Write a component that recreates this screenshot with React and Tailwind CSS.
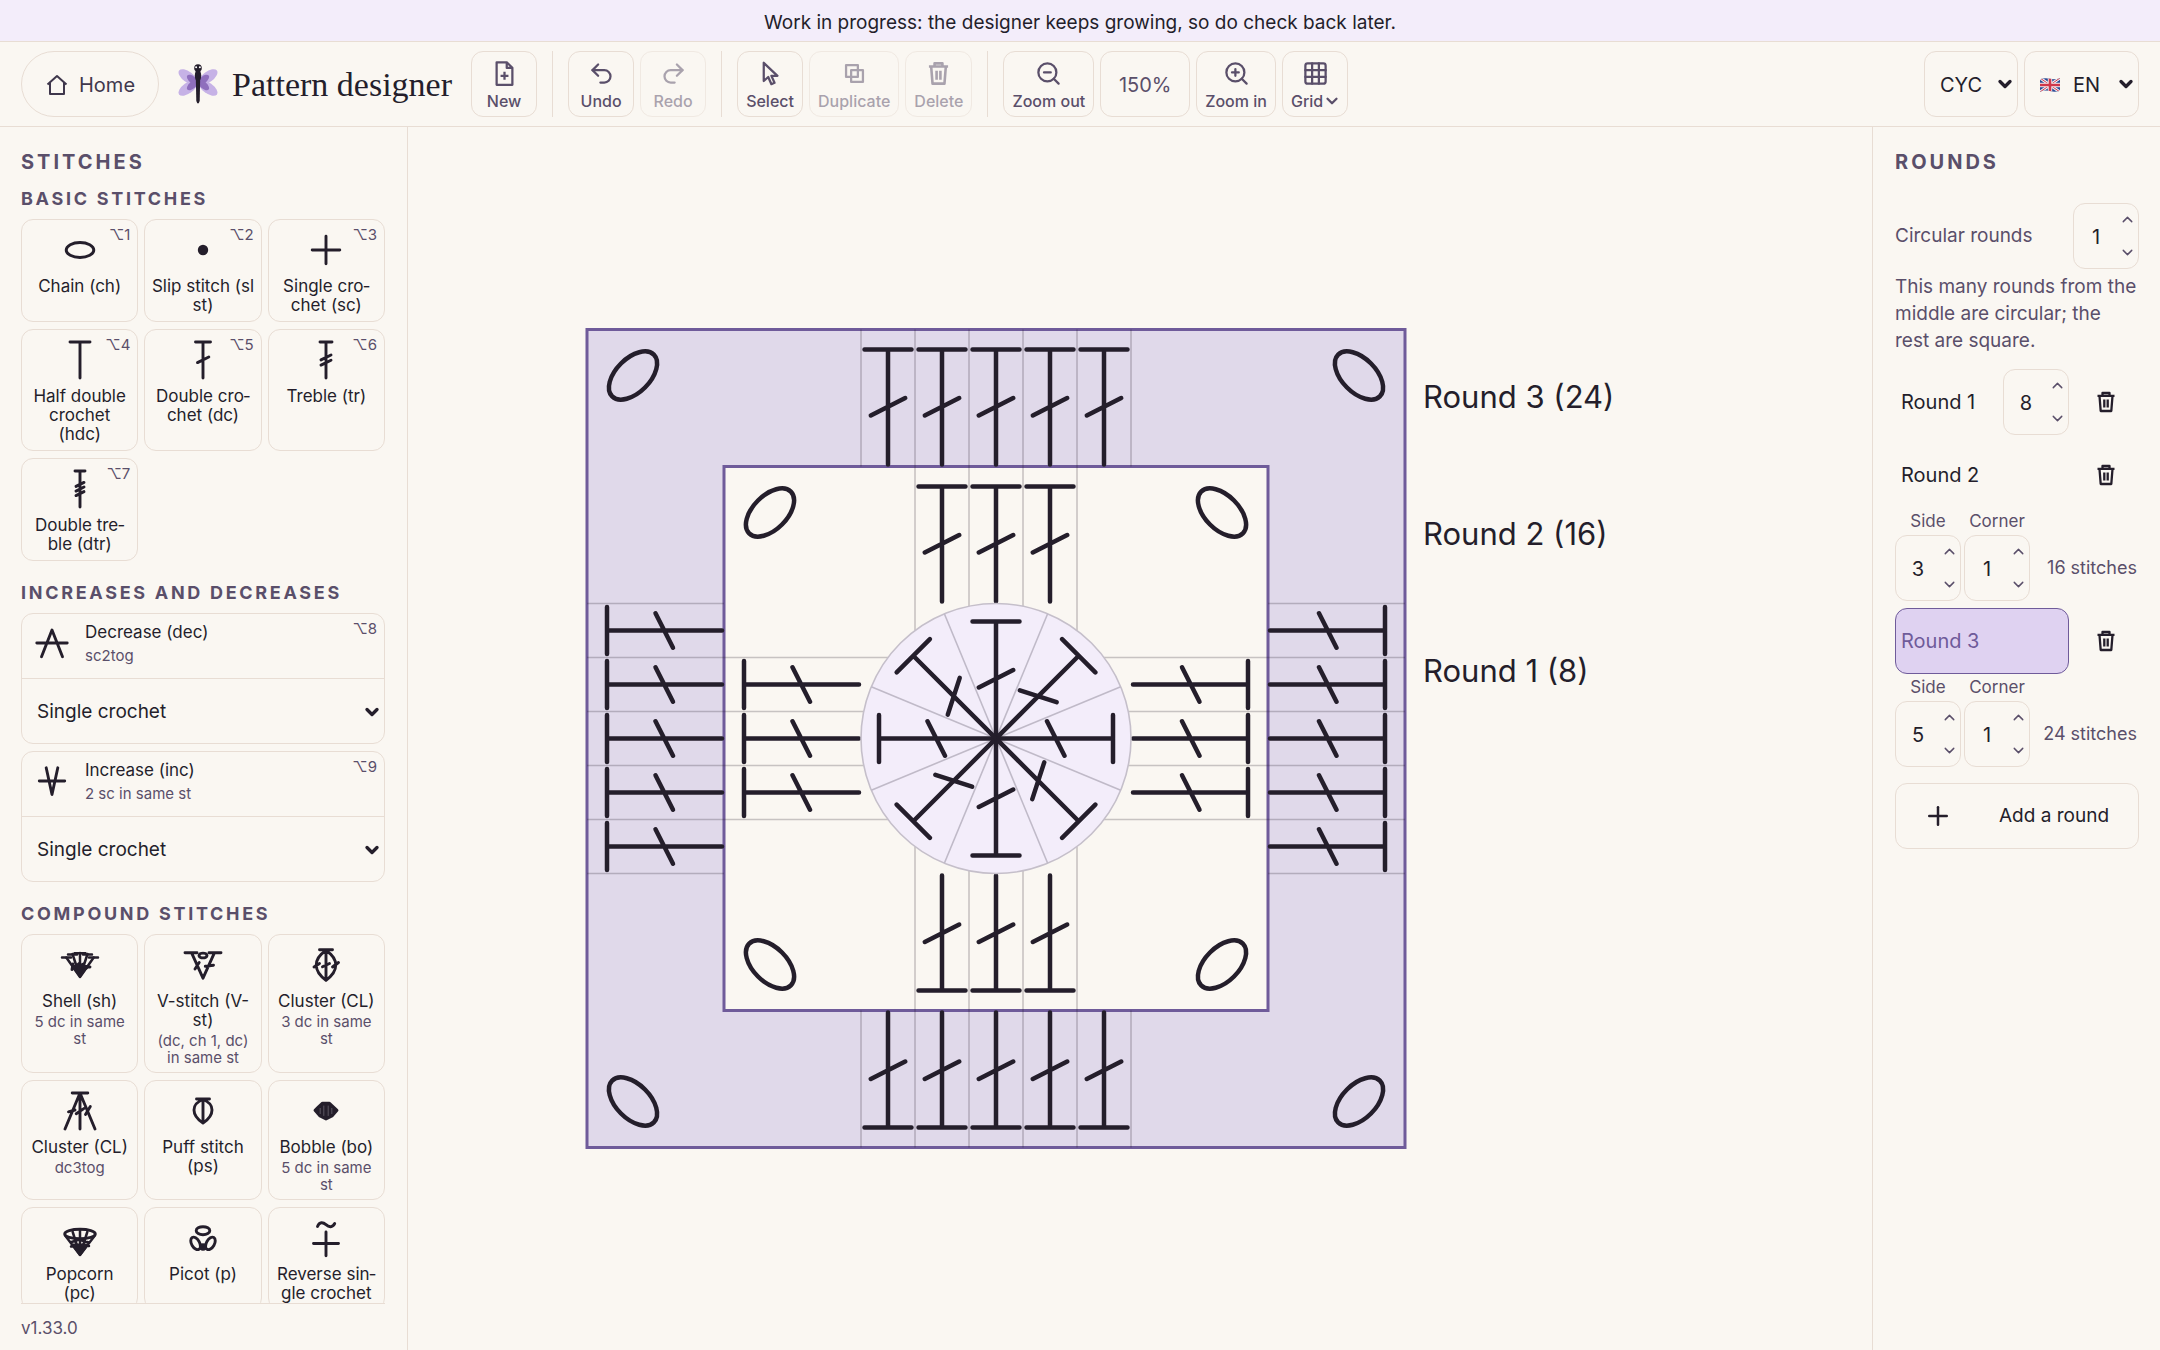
import { useState } from 'react';
import { ChevronDown, ChevronUp, Grid3x3, Plus, Redo2, Undo2, ZoomIn, ZoomOut } from 'lucide-react';

const INK = '#241e2b';

// ── Stitch symbols (drawn around 0,0 in a 40x40 box) ───────────────────────
const SYMBOLS = {
  chain: <ellipse rx="13.8" ry="7.5" />,
  slip: <circle r="5.2" fill={INK} stroke="none" />,
  single: <path d="M-13.8 0H13.8M0-13.8V13.8" />,
  half: <path d="M-10-18H10M0-18V18" />,
  double: <path d="M-7.5-18H7.5M0-18V18M-5.5 2.6 5.8-3" />,
  treble: <path d="M-6-18H6M0-18V18M-5-.1 5-5M-5 5.1 5 .2" />,
  dtreble: <path d="M-5-18H5M0-18V18M-4-2.6 4-6.6M-4 2.1 4-2M-4 6.6 4 2.6" />,
  decrease: <path d="M-10.5 13.7 0-13 10.5 13.7M-15.2 0H15.2" />,
  increase: <path d="M-5.8-13.2 0 13.5 5.8-13.2M-12.7 0H12.7" />,
  shell: (
    <>
      <path d="M0 12-13.7-7.5M0 12-7.5-11M0 12V-12M0 12 7.5-11M0 12 13.7-7.5" strokeWidth="2.5" />
      <path d="M-18-7.5H-9M-12-10.6H-3M-5.5-11.8H5.5M3-10.6H12M9-7.5H18" strokeWidth="2.5" />
      <path d="M-8 4.5-7-1M-6 3-1-1.5M-3 2 3.4-1M1 0 6.5 3M3.5 1.5 10 2" />
      <path d="M0 11-7 1.5H7z" fill={INK} />
    </>
  ),
  vstitch: (
    <>
      <path d="M-11.5-12.3 0 13.2 11.5-12.3M-18-12.3H-6M6-12.3H18M-8 4-3.8-2.5M2.3 1.2 10.5 .2" />
      <ellipse cy="-9.5" rx="4" ry="2.4" />
    </>
  ),
  cluster: (
    <path d="M-6.5-15.3H6.5M0-15.3V15.3M0-14.5C-13-6-13 6 0 15.3M0-14.5C13-6 13 6 0 15.3M-12 2-6.5-1.5M-3.5 1.8 3.5-1.5M6.5 2 12.5-2.5" />
  ),
  clusterDec: (
    <path d="M-7.8-18H7.8M0-18V18M0-18-15 18M0-18 15 18M-11.5.8-5-1M-3.8 2.8 3.8-2.4M5.5 3.5 10.3-4.5" />
  ),
  puff: <path d="M-6.5-12H6.5M0-12V12M0-11.5C-12-7-12 4 0 12M0-11.5C12-7 12 4 0 12" />,
  bobble: (
    <>
      <path d="M-3.5-7.8H3.5L11-.8 6 5 0 8-6 5-11-.8-7.5-4.2z" fill={INK} />
      <path d="M-2.2-5V4.5M2.2-5V4.5M-5.8-2.6V2.6M5.8-2.6V2.6" stroke="#746e79" strokeWidth="0.7" />
    </>
  ),
  popcorn: (
    <>
      <ellipse cy="-4" rx="15.3" ry="4.8" />
      <path d="M0 17-14.5-2M0 17-7.3-6M0 17V-8M0 17 7.3-6M0 17 14.5-2M-9 8.5 9 8M-8.5 4-2 2M2 2.5 9 4.5" strokeWidth="2.5" />
      <path d="M0 16.5-7 7H7z" fill={INK} />
    </>
  ),
  picot: (
    <>
      <ellipse cy="-7.3" rx="6.8" ry="4" />
      <ellipse cx="-7.4" cy="5.4" rx="4" ry="6.8" transform="rotate(-30 -7.4 5.4)" />
      <ellipse cx="7.4" cy="5.4" rx="4" ry="6.8" transform="rotate(30 7.4 5.4)" />
      <circle cy="9" r="2.3" fill={INK} />
    </>
  ),
  reverse: <path d="M-8.5-11.5C-6.5-16.5-3-16 0-13.3S6.5-10.3 8.7-14.5M0-6V17.7M-12.5 5.5H12.5" />,
};

function Symbol({ name }) {
  return (
    <svg viewBox="-20 -20 40 40" className="size-10 shrink-0" fill="none" stroke={INK} strokeWidth="2.9" strokeLinecap="round" strokeLinejoin="round" aria-hidden="true">
      {SYMBOLS[name]}
    </svg>
  );
}

const BASIC = [
  { symbol: 'chain', name: 'Chain (ch)', key: '⌥1' },
  { symbol: 'slip', name: 'Slip stitch (sl st)', key: '⌥2' },
  { symbol: 'single', name: 'Single cro\u00adchet (sc)', key: '⌥3' },
  { symbol: 'half', name: 'Half double crochet (hdc)', key: '⌥4' },
  { symbol: 'double', name: 'Double cro\u00adchet (dc)', key: '⌥5' },
  { symbol: 'treble', name: 'Treble (tr)', key: '⌥6' },
  { symbol: 'dtreble', name: 'Double tre\u00adble (dtr)', key: '⌥7' },
];

const SHAPING = [
  { symbol: 'decrease', name: 'Decrease (dec)', note: 'sc2tog', key: '⌥8' },
  { symbol: 'increase', name: 'Increase (inc)', note: '2 sc in same st', key: '⌥9' },
];

const COMPOUND = [
  { symbol: 'shell', name: 'Shell (sh)', note: '5 dc in same st' },
  { symbol: 'vstitch', name: 'V-stitch (V-st)', note: '(dc, ch 1, dc) in same st' },
  { symbol: 'cluster', name: 'Cluster (CL)', note: '3 dc in same st' },
  { symbol: 'clusterDec', name: 'Cluster (CL)', note: 'dc3tog' },
  { symbol: 'puff', name: 'Puff stitch (ps)' },
  { symbol: 'bobble', name: 'Bobble (bo)', note: '5 dc in same st' },
  { symbol: 'popcorn', name: 'Popcorn (pc)' },
  { symbol: 'picot', name: 'Picot (p)' },
  { symbol: 'reverse', name: 'Reverse sin\u00adgle crochet' },
];

// ── Icons ──────────────────────────────────────────────────────────────────
function Icon({ children, className = 'size-[27px]' }) {
  return (
    <svg viewBox="0 0 24 24" className={className} fill="none" stroke="currentColor" strokeWidth="2" strokeLinejoin="round" aria-hidden="true">
      {children}
    </svg>
  );
}

const FileIcon = () => (
  <Icon>
    <path d="M5 2h9l5 5v15H5zM14 2v5h5M12 10.5v7M8.5 14h7" />
  </Icon>
);
const PointerIcon = () => (
  <Icon>
    <path d="M6 2.5v16.2l4-3.6 2.8 6.4 2.8-1.2-2.8-6.2h5.4z" />
  </Icon>
);
const DuplicateIcon = () => (
  <Icon>
    <path d="M4.5 4.5h10.5v10.5H4.5zM9 9h10.5v10.5H9z" />
  </Icon>
);
const TrashIcon = ({ className }) => (
  <Icon className={className}>
    <path d="M3.5 5.8h17M8.5 5.5V3h7v2.5M5.5 6l1.2 15h10.6l1.2-15M10.3 9.5v8M13.7 9.5v8" strokeWidth="2.3" />
  </Icon>
);

function Dragonfly() {
  return (
    <svg viewBox="-20 -20 40 40" className="size-10" aria-hidden="true">
      <g fill="#c6b2e6">
        <ellipse cx="-10" cy="-7" rx="11" ry="5.4" transform="rotate(36 -10 -7)" />
        <ellipse cx="10" cy="-7" rx="11" ry="5.4" transform="rotate(-36 10 -7)" />
        <ellipse cx="-10" cy="4" rx="11" ry="5.4" transform="rotate(-36 -10 4)" />
        <ellipse cx="10" cy="4" rx="11" ry="5.4" transform="rotate(36 10 4)" />
      </g>
      <g fill="#8f6fbd">
        <ellipse cx="-5.5" cy="-4.2" rx="6.8" ry="3.4" transform="rotate(40 -5.5 -4.2)" />
        <ellipse cx="5.5" cy="-4.2" rx="6.8" ry="3.4" transform="rotate(-40 5.5 -4.2)" />
        <ellipse cx="-5.5" cy="1.2" rx="6.8" ry="3.4" transform="rotate(-40 -5.5 1.2)" />
        <ellipse cx="5.5" cy="1.2" rx="6.8" ry="3.4" transform="rotate(40 5.5 1.2)" />
      </g>
      <g fill={INK}>
        <circle cy="-16" r="3.8" />
        <ellipse cy="-8.5" rx="3.2" ry="6" />
        <path d="M-2.2-6H2.2L1.7 17Q0 22-1.7 17z" />
      </g>
      <circle cx="-1.9" cy="-16.8" r="1" fill="#fff" />
      <circle cx="1.9" cy="-16.8" r="1" fill="#fff" />
    </svg>
  );
}

function Flag() {
  return (
    <svg viewBox="0 0 20 14" className="h-3.5 w-5" aria-hidden="true">
      <clipPath id="flag">
        <path d="M0 1.2Q5-.4 10 .8T20 .2V12.8Q15 14.4 10 13T0 13.8z" />
      </clipPath>
      <g clipPath="url(#flag)">
        <path d="M0 0h20v14H0z" fill="#2b4a94" />
        <path d="M0 0l20 14M20 0 0 14" stroke="#f2eff2" strokeWidth="3" />
        <path d="M0 0l20 14M20 0 0 14" stroke="#d0374a" strokeWidth="1" />
        <path d="M10 0v14M0 7h20" stroke="#f2eff2" strokeWidth="4.4" />
        <path d="M10 0v14M0 7h20" stroke="#d0374a" strokeWidth="2.6" />
      </g>
    </svg>
  );
}

// ── Toolbar ────────────────────────────────────────────────────────────────
function ToolButton({ icon, label, disabled }) {
  return (
    <button
      type="button"
      disabled={disabled}
      className="flex h-[66px] min-w-[66px] flex-col items-center gap-[3px] rounded-xl border border-[#e8ddd4] px-2 pt-2 text-base/[22px] font-medium text-[#5a4f6a] disabled:opacity-50"
    >
      {icon}
      <span className="flex items-center">{label}</span>
    </button>
  );
}

const Divider = () => <div className="mx-[9px] h-[66px] w-px bg-[#e8ddd4]" />;

function Toolbar({ zoom }) {
  return (
    <header className="flex items-center border-b border-[#e8ddd4] px-[21px] py-[9px]">
      <a href="#home" className="flex h-[66px] items-center gap-2.5 rounded-full border border-[#e8ddd4] px-[23px] pt-0.5 text-xl text-[#3f374c]">
        <Icon className="size-6">
          <path d="M2.5 11.5 12 3l9.5 8.5M5 9.5V21h14V9.5" />
        </Icon>
        Home
      </a>
      <div className="ml-[19px] flex items-center gap-3.5">
        <Dragonfly />
        <h1 className="pt-0.5 font-['Liberation_Serif',serif] text-[34px]/[40px]">Pattern designer</h1>
      </div>
      <div className="ml-[19px] flex items-center gap-1.5">
        <ToolButton icon={<FileIcon />} label="New" />
        <Divider />
        <ToolButton icon={<Undo2 size={27} />} label="Undo" />
        <ToolButton icon={<Redo2 size={27} />} label="Redo" disabled />
        <Divider />
        <ToolButton icon={<PointerIcon />} label="Select" />
        <ToolButton icon={<DuplicateIcon />} label="Duplicate" disabled />
        <ToolButton icon={<TrashIcon />} label="Delete" disabled />
        <Divider />
        <ToolButton icon={<ZoomOut size={27} />} label="Zoom out" />
        <button type="button" className="h-[66px] w-[90px] rounded-xl border border-[#e8ddd4] pt-0.5 text-xl text-[#5a4f6a]">{zoom}%</button>
        <ToolButton icon={<ZoomIn size={27} />} label="Zoom in" />
        <ToolButton icon={<Grid3x3 size={27} />} label={<>Grid <ChevronDown size={18} strokeWidth={3} className="-mr-0.5" /></>} />
      </div>
      <div className="ml-auto flex gap-1.5">
        <div className="relative">
          <select aria-label="Terminology" className="h-[66px] w-[94px] appearance-none rounded-xl border border-[#e8ddd4] pt-0.5 pl-[15px] text-xl">
            <option>CYC</option>
          </select>
          <ChevronDown size={20} strokeWidth={4} className="pointer-events-none absolute top-[23px] right-[3px]" />
        </div>
        <div className="relative">
          <select aria-label="Language" className="h-[66px] w-[115px] appearance-none rounded-xl border border-[#e8ddd4] pt-0.5 pl-12 text-xl">
            <option>EN</option>
          </select>
          <span className="pointer-events-none absolute top-[27px] left-4"><Flag /></span>
          <ChevronDown size={20} strokeWidth={4} className="pointer-events-none absolute top-[23px] right-[3px]" />
        </div>
      </div>
    </header>
  );
}

// ── Stitch palette ─────────────────────────────────────────────────────────
function StitchTile({ stitch }) {
  return (
    <button type="button" className="relative flex flex-col items-center rounded-xl border border-[#e8ddd4] px-1.5 pt-2.5 pb-1.5 text-center">
      <Symbol name={stitch.symbol} />
      <span className="mt-[7px] text-[17px]/[19px]">{stitch.name}</span>
      {stitch.note && <span className="mt-0.5 text-[15px]/[17px] text-[#5a4f6a]">{stitch.note}</span>}
      {stitch.key && <kbd className="absolute top-1.5 right-[7px] font-[Inter,sans-serif] text-[15px]/[18px] text-[#5a4f6a]">{stitch.key}</kbd>}
    </button>
  );
}

function ShapingCard({ stitch }) {
  return (
    <div className="rounded-xl border border-[#e8ddd4]">
      <button type="button" className="relative flex h-16 w-full items-center gap-[13px] pb-1.5 pl-2.5 text-left">
        <Symbol name={stitch.symbol} />
        <span className="flex flex-col">
          <span className="text-[17px]/[26px]">{stitch.name}</span>
          <span className="text-[15px]/[22px] text-[#5a4f6a]">{stitch.note}</span>
        </span>
        <kbd className="absolute top-1.5 right-[7px] font-[Inter,sans-serif] text-[15px]/[18px] text-[#5a4f6a]">{stitch.key}</kbd>
      </button>
      <div className="relative border-t border-[#e8ddd4]">
        <select aria-label={`${stitch.name} stitch`} className="h-16 w-full appearance-none pt-0.5 pl-[15px] text-[19px]">
          <option>Single crochet</option>
        </select>
        <ChevronDown size={20} strokeWidth={4} className="pointer-events-none absolute top-[23px] right-[2px]" />
      </div>
    </div>
  );
}

function PaletteSection({ title, children }) {
  return (
    <section className="mb-[19px]">
      <h3 className="mb-[7px] text-lg/[26px] font-bold tracking-[0.15em] text-[#5a4f6a] uppercase">{title}</h3>
      {children}
    </section>
  );
}

function Palette() {
  return (
    <aside className="flex w-[408px] shrink-0 flex-col border-r border-[#e8ddd4] pr-[22px] pl-[21px]">
      <div className="min-h-0 flex-1 overflow-y-auto border-b border-[#e8ddd4] pt-[21px] [scrollbar-width:none]">
        <h2 className="mb-2.5 text-xl/[28px] font-bold tracking-[0.15em] text-[#5a4f6a] uppercase">Stitches</h2>
        <PaletteSection title="Basic stitches">
          <div className="grid grid-cols-3 gap-x-1.5 gap-y-[7px]">
            {BASIC.map(s => <StitchTile key={s.symbol} stitch={s} />)}
          </div>
        </PaletteSection>
        <PaletteSection title="Increases and decreases">
          <div className="flex flex-col gap-[7px]">
            {SHAPING.map(s => <ShapingCard key={s.symbol} stitch={s} />)}
          </div>
        </PaletteSection>
        <PaletteSection title="Compound stitches">
          <div className="grid grid-cols-3 gap-x-1.5 gap-y-[7px]">
            {COMPOUND.map(s => <StitchTile key={s.symbol} stitch={s} />)}
          </div>
        </PaletteSection>
      </div>
      <footer className="pt-3 pb-2.5 text-[17px]/[24px] text-[#5a4f6a]">v1.33.0</footer>
    </aside>
  );
}

// ── Chart ──────────────────────────────────────────────────────────────────
const CELL = 54;
const ROUND_HEIGHT = 137;
const CIRCLE = 135;
const SIDES = [0, 90, 180, 270];

// Double crochet standing on `base`, pointing away from the middle
function ChartStitch({ base, x = 0 }) {
  return (
    <g transform={`translate(${x} ${-base})`}>
      <path d="M0-2V-117M-23.5-117H23.5M-17.2-51 17.2-68.5" />
    </g>
  );
}

function SquareRound({ inner, count }) {
  const outer = inner + ROUND_HEIGHT;
  const edges = Array.from({ length: count + 1 }, (_, i) => (i - count / 2) * CELL);
  const middles = Array.from({ length: count }, (_, i) => (i - (count - 1) / 2) * CELL);
  return SIDES.map(angle => (
    <g key={angle} transform={`rotate(${angle})`}>
      {edges.map(x => (
        <path
          key={x}
          d={`M${x} ${-(inner === CIRCLE ? Math.sqrt(CIRCLE * CIRCLE - x * x) : inner)}V${-outer}`}
          stroke={INK}
          strokeOpacity="0.24"
          strokeWidth="1.6"
        />
      ))}
      <g stroke={INK} strokeWidth="4.5" strokeLinecap="round">
        {middles.map(x => <ChartStitch key={x} base={inner} x={x} />)}
        <ellipse cx={outer - 46} cy={46 - outer} rx="29.5" ry="17" transform={`rotate(45 ${outer - 46} ${46 - outer})`} />
      </g>
    </g>
  ));
}

function Chart({ rounds }) {
  const spokes = Array.from({ length: 8 }, (_, i) => i * 45);
  return (
    <svg viewBox="-588 -611 1464 1222" className="h-full w-full" fill="none" role="img" aria-label="Stitch chart">
      <path d="M-409-409H409V409H-409zM-272-272V272H272V-272z" fill="#e0d9ea" stroke="#6f5b9a" strokeWidth="3" fillRule="evenodd" />
      <SquareRound inner={CIRCLE + ROUND_HEIGHT} count={5} />
      <SquareRound inner={CIRCLE} count={3} />
      <circle r={CIRCLE} fill="#f3edfa" stroke="#c5bfca" strokeWidth="1.6" />
      {spokes.map(a => <path key={a} d={`M0 0V${-CIRCLE}`} transform={`rotate(${a + 22.5})`} stroke="#c0bac8" strokeWidth="1.6" />)}
      <g stroke={INK} strokeWidth="4.5" strokeLinecap="round">
        {spokes.map(a => <g key={a} transform={`rotate(${a})`}><ChartStitch base={0} /></g>)}
      </g>
      <g fill={INK} className="text-[31px]">
        {rounds.map(r => (
          <text key={r.id} x="427" y={80 - r.id * ROUND_HEIGHT}>Round {r.id} ({r.total})</text>
        ))}
      </g>
    </svg>
  );
}

// ── Rounds panel ───────────────────────────────────────────────────────────
function NumberBox({ label, value, onChange }) {
  return (
    <div className="relative w-[66px] shrink-0">
      <input
        type="text"
        inputMode="numeric"
        aria-label={label}
        value={value}
        onChange={(e) => onChange(Number(e.target.value) || 0)}
        className="block h-[66px] w-full rounded-xl border border-[#e8ddd4] pt-0.5 pr-5 text-center text-xl text-[#241e2b]"
      />
      <button type="button" aria-label={`Increase ${label}`} onClick={() => onChange(value + 1)} className="absolute top-2 right-[3px] text-[#5a4f6a]">
        <ChevronUp size={17} strokeWidth={2} />
      </button>
      <button type="button" aria-label={`Decrease ${label}`} onClick={() => onChange(Math.max(0, value - 1))} className="absolute right-[3px] bottom-2 text-[#5a4f6a]">
        <ChevronDown size={17} strokeWidth={2} />
      </button>
    </div>
  );
}

function RoundItem({ round, selected, onSelect, onUpdate }) {
  return (
    <li>
      <div className="flex items-center gap-1">
        <button
          type="button"
          onClick={onSelect}
          className={`h-[66px] flex-1 rounded-xl border pl-[5px] text-left text-xl ${selected ? 'border-[#6f5b9a] bg-[#dfd2f1] text-[#6f5b9a]' : 'border-transparent'}`}
        >
          Round {round.id}
        </button>
        {round.stitches !== undefined && (
          <NumberBox label={`Round ${round.id} stitches`} value={round.stitches} onChange={(v) => onUpdate({ stitches: v })} />
        )}
        <button type="button" aria-label={`Delete round ${round.id}`} className="flex h-[66px] w-[66px] items-center justify-center">
          <TrashIcon className="size-6" />
        </button>
      </div>
      {round.side !== undefined && (
        <div className="flex items-end gap-[3px]">
          <div className="text-center text-[17px]/[27px] text-[#5a4f6a]">
            Side
            <NumberBox label={`Round ${round.id} side`} value={round.side} onChange={(v) => onUpdate({ side: v })} />
          </div>
          <div className="text-center text-[17px]/[27px] text-[#5a4f6a]">
            Corner
            <NumberBox label={`Round ${round.id} corner`} value={round.corner} onChange={(v) => onUpdate({ corner: v })} />
          </div>
          <span className="flex h-[66px] flex-1 items-center justify-end pr-0.5 text-lg whitespace-nowrap text-[#5a4f6a]">
            {round.total} stitches
          </span>
        </div>
      )}
    </li>
  );
}

function RoundsPanel({ rounds, onUpdate }) {
  const [circular, setCircular] = useState(1);
  const [selected, setSelected] = useState(3);
  return (
    <aside className="w-[288px] shrink-0 border-l border-[#e8ddd4] pt-[21px] pr-[21px] pl-[22px]">
      <h2 className="text-xl/[28px] font-bold tracking-[0.15em] text-[#5a4f6a] uppercase">Rounds</h2>
      <div className="mt-[27px] flex items-center justify-between text-[19px] text-[#5a4f6a]">
        Circular rounds
        <NumberBox label="Circular rounds" value={circular} onChange={setCircular} />
      </div>
      <p className="mt-1 text-[19px]/[27px] text-[#5a4f6a]">This many rounds from the middle are circular; the rest are square.</p>
      <ul className="mt-[15px] flex flex-col gap-[7px]">
        {rounds.map(r => (
          <RoundItem key={r.id} round={r} selected={r.id === selected} onSelect={() => setSelected(r.id)} onUpdate={(patch) => onUpdate(r.id, patch)} />
        ))}
      </ul>
      <button type="button" className="mt-4 flex h-[66px] w-full items-center rounded-xl border border-[#e8ddd4] pr-2.5 text-[19px]">
        <span className="flex w-[84px] justify-center"><Plus size={30} strokeWidth={2} /></span>
        <span className="flex-1 text-center">Add a round</span>
      </button>
    </aside>
  );
}

export default function App() {
  const [rounds, setRounds] = useState([
    { id: 1, stitches: 8, total: 8 },
    { id: 2, side: 3, corner: 1, total: 16 },
    { id: 3, side: 5, corner: 1, total: 24 },
  ]);

  const updateRound = (id, patch) => {
    setRounds(prev => prev.map(r => {
      if (r.id !== id) return r;
      const next = { ...r, ...patch };
      return { ...next, total: next.stitches ?? (next.side + next.corner) * 4 };
    }));
  };

  return (
    <div className="flex h-screen flex-col overflow-hidden bg-[#faf7f2] font-[Inter,sans-serif] text-[#241e2b]">
      <div className="border-b border-[#e8ddd4] bg-[#f3edfa] pt-[9px] pb-1 text-center text-[19px]/[28px]">
        Work in progress: the designer keeps growing, so do check back later.
      </div>
      <Toolbar zoom={150} />
      <div className="flex min-h-0 flex-1">
        <Palette />
        <main className="min-w-0 flex-1">
          <Chart rounds={rounds} />
        </main>
        <RoundsPanel rounds={rounds} onUpdate={updateRound} />
      </div>
    </div>
  );
}
